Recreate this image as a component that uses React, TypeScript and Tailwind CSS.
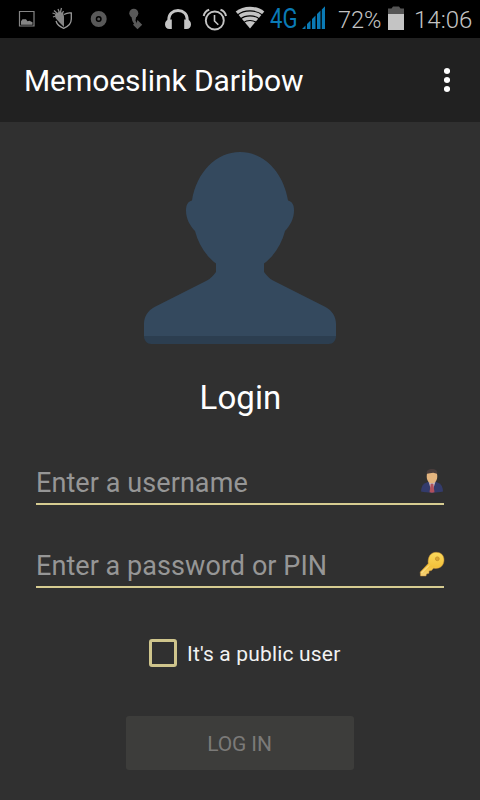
const StatusBar = () => {
    return (
        <div className="h-[38px] bg-black flex items-start text-[#c4c4c4] overflow-hidden">
            {/* Notifications */}
            <svg className="shrink-0 ml-[18px]" width="18" height="38" viewBox="18 0 18 38" fill="none">
                <path d="M19.500 11.500h14.500v14.500H19.500z" stroke="#858585" strokeWidth="1.2" />
                <path d="M21 24.800v-3.500l1.500-2h3.500l1.500 2 2-.5 3 1.500v2.500z" fill="#858585" />
            </svg>
            <svg className="shrink-0 ml-[15px]" width="23" height="38" viewBox="51 0 23 38" fill="none">
                <path d="M64 14.500c2.500-1.500 5-2 7.300-1.500v6c0 4-3 7.500-7.600 9.300-3.500-1.300-6.700-3.800-7.700-7.300" stroke="#9a9a9a" strokeWidth="1.3" />
                <path d="M55 14.500l3.500-2.500 4.500.5 1 4v10.500l-4.500-4.500-4-4.500z" fill="#858585" />
                <path d="M52.500 13l6 2M54 10.500l5 4.500M58 9l2 5M61.500 8l-1.500 6M63.500 11l-2 4M53 17l4-1.500" stroke="#8a8a8a" strokeWidth="1.300" />
            </svg>
            <svg className="shrink-0 ml-[16px]" width="18" height="38" viewBox="90 0 18 38" fill="none">
                <circle cx="98.700" cy="19" r="5.500" stroke="#595959" strokeWidth="5" />
                <circle cx="98.700" cy="19" r="1.500" fill="#595959" />
            </svg>
            <svg className="shrink-0 ml-[20px]" width="16" height="38" viewBox="128 0 16 38" fill="#595959">
                <circle cx="133.800" cy="13.200" r="4.500" />
                <path d="M131.500 15h5l-1 5.500 1 2.500-1.500 1.500c-2.500-2-3.500-5-3.500-9.500z" />
                <path d="M137.500 20l4.700 4.700-4.700 4.500-4.500-4.500 1.800-2 1.500.5z" />
            </svg>

            {/* System icons */}
            <svg className="shrink-0 ml-[20px]" width="28" height="38" viewBox="164 0 28 38" fill="none">
                <path d="M168.800 21v-1.700c0-5 3.800-8.800 9.200-8.800s9.200 3.800 9.200 8.800V21" stroke="#c4c4c4" strokeWidth="2.900" />
                <path d="M171.800 19.500v9.500h-2.300c-2.700 0-4.500-2-4.500-4.800s2-4.700 4.500-4.700zM184.200 19.500v9.500h2.300c2.700 0 4.500-2 4.500-4.800s-2-4.700-4.500-4.700z" fill="#c4c4c4" />
            </svg>
            <svg className="shrink-0 ml-[10px]" width="26" height="38" viewBox="202 0 26 38" fill="none" stroke="#c4c4c4">
                <circle cx="214.800" cy="20.500" r="9" strokeWidth="1.900" />
                <path d="M214.500 15v6l3.800 3.800" strokeWidth="1.600" />
                <path d="M203.700 16c.5-3 2.500-5.300 5.500-6.300M226 16c-.5-3-2.500-5.300-5.500-6.300" strokeWidth="2" />
            </svg>
            <svg className="shrink-0 ml-[7px]" width="30" height="38" viewBox="235 0 30 38" fill="none">
                <path d="M235.700 11.500c7.500-6.300 21.100-6.300 28.600 0L250 28.500z" fill="#c4c4c4" />
                <g stroke="#000" strokeWidth="1.100">
                    <path d="M237.500 15c6.500-5.500 18.500-5.500 25 0" />
                    <path d="M240.500 19c5-4.200 14-4.200 19 0" />
                    <path d="M243.500 22.700c3.500-3 9.500-3 13 0" />
                </g>
            </svg>
            <span className="ml-[5px] w-[32px] shrink-0 text-[27px] leading-[38px] text-[#0a7ab5]">
                <span className="inline-block origin-left scale-x-[0.82]">4G</span>
            </span>
            <svg className="shrink-0" width="24" height="38" viewBox="302 0 24 38" fill="#0a7ab5">
                <path d="M302 29l3.500-3.500V29zM307 29v-5l3.500-3.500V29zM312 29V19l3.500-3.500V29zM317 29V14l3.500-3.500V29zM321.800 29V9.500l3.200-3.200V29z" />
            </svg>
            <span className="ml-[12px] w-[50px] shrink-0 text-[24px] leading-[40px] font-light">
                <span className="inline-block origin-left scale-x-[0.98]">72%</span>
            </span>
            <svg className="shrink-0" width="16" height="38" viewBox="388 0 16 38">
                <path d="M388 8.500h3.500L393 6.500h6l1.500 2h3.500V14h-16z" fill="#555" />
                <path d="M388 14h16v16h-16z" fill="#c4c4c4" />
            </svg>
            <span className="ml-[10px] shrink-0 text-[24px] leading-[40px] font-light">14:06</span>
        </div>
    );
};

const Avatar = () => {
    return (
        <svg className="mt-[30px] shrink-0" width="192" height="192" viewBox="144 152 192 192">
            <path
                fill="#34495e"
                d="M240 152c-23.500 0-43.500 20-48 48.500-4 1-6 4-6 10 0 8.500 4 15 9 20.500 3.500 13.500 11 25 21 32.500v8.500c-3 4-5.500 6.500-9 8.500L154.500 307c-6.500 3.500-10.500 9.500-10.500 17v13h192v-13c0-7.500-4-13.500-10.500-17L273 280.500c-3.500-2-6-4.500-9-8.500v-8.500c10-7.500 17.500-19 21-32.500 5-5.500 9-12 9-20.500 0-6-2-9-6-10C283.500 172 263.500 152 240 152z"
            />
            <path fill="#2c3e50" d="M144 336h192c0 4.500-3 8-7.500 8h-177c-4.500 0-7.500-3.500-7.500-8z" />
        </svg>
    );
};

const UserIcon = () => {
    return (
        <svg width="24" height="26" viewBox="420 468 24 26">
            <path d="M421 491.500c.3-4.500 1.500-7 4-8.200l4-1.800h6l4 1.800c2.500 1.200 3.700 3.700 4 8.200-6 1.500-16 1.500-22 0z" fill="#333b6b" />
            <path d="M428.500 481.500l3.500 2 3.500-2-1.500 5-2 6-2-6z" fill="#c9b4bc" />
            <path d="M430.700 484h2.600l1.200 8.300-2.500.5-2.500-.5z" fill="#b0505c" />
            <path d="M426.800 475c0-5.500 10.400-5.500 10.400 0 .5 5-1.700 8.300-5.200 8.300s-5.700-3.300-5.200-8.300z" fill="#e3b47e" />
            <path d="M426.800 473.800c-.7-3.300 1.700-4.800 5.200-4.800s5.900 1.500 5.200 4.800c-1.500-.2-3-.6-4-1-2 .5-4.500.8-6.400 1z" fill="#483c3b" />
        </svg>
    );
};

const KeyIcon = () => {
    return (
        <svg width="26" height="26" viewBox="419 551 26 26">
            <defs>
                <linearGradient id="gold" x1="0" y1="0" x2="0" y2="1">
                    <stop offset="0" stopColor="#fbd95c" />
                    <stop offset="0.6" stopColor="#f3c23c" />
                    <stop offset="1" stopColor="#f6d27c" />
                </linearGradient>
            </defs>
            <path
                d="M436 552.300c5 0 8 3 8 7.700 0 5-3.500 8.500-8.500 8.500l-2-.3-2 2.300-2.500.5v2.300l-2.500.7-.5 2h-5.500l-.3-4 8-8.500c-.7-6 2.300-11.200 7.800-11.200z"
                fill="url(#gold)"
                stroke="#c98f30"
                strokeWidth=".5"
            />
            <path d="M421.500 573l7.500-7.500" stroke="#ffe7a0" strokeWidth="1" />
            <circle cx="437.300" cy="558.800" r="1.900" fill="#d9a532" stroke="#c28f2b" strokeWidth=".8" />
        </svg>
    );
};

export default function App() {
    return (
        <div className="w-[480px] h-[800px] bg-[#303030] flex flex-col overflow-hidden font-['Roboto',sans-serif]">
            <StatusBar />

            <header className="h-[84px] bg-[#212121] text-white flex items-center justify-between pl-[24px] pr-[30px]">
                <h1 className="pt-px text-[30px] leading-[84px] tracking-[-0.07px]">Memoeslink Daribow</h1>
                <svg width="6" height="26" viewBox="0 0 6 26" fill="#fff">
                    <circle cx="3" cy="4" r="3.100" />
                    <circle cx="3" cy="13" r="3.100" />
                    <circle cx="3" cy="22" r="3.100" />
                </svg>
            </header>

            <main className="flex flex-col items-center px-[36px]">
                <Avatar />
                <h2 className="mt-[34px] h-[40px] pl-px text-[33px] leading-[40px] tracking-[0.1px] text-white">Login</h2>

                {/* Fields */}
                <div className="mt-[41px] w-full h-[46px] flex justify-between border-b-2 border-[#d6cc91]">
                    <span className="text-[27px] leading-[48px] tracking-[0.08px] text-[#969696]">Enter a username</span>
                    <div className="mt-[9px]">
                        <UserIcon />
                    </div>
                </div>
                <div className="mt-[37px] w-full h-[46px] flex justify-between border-b-2 border-[#d6cc91]">
                    <span className="text-[27px] leading-[48px] tracking-[0.06px] text-[#969696]">Enter a password or PIN</span>
                    <div className="mt-[9px] -mr-px">
                        <KeyIcon />
                    </div>
                </div>

                <label className="mt-[51px] h-[28px] flex items-center self-start ml-[113px]">
                    <span className="size-[28px] rounded-[3px] border-3 border-[#cfc58c]" />
                    <span className="ml-[10px] pt-[2px] text-[21px] leading-[28px] tracking-[0.17px] text-[#f2f2f2]">It's a public user</span>
                </label>

                <button className="mt-[49px] w-[228px] h-[54px] pt-[3px] pr-px rounded-[3px] bg-[#3d3d3b] text-[#7b7a78] text-[21px] tracking-[-0.1px]">
                    LOG IN
                </button>
            </main>
        </div>
    );
}
